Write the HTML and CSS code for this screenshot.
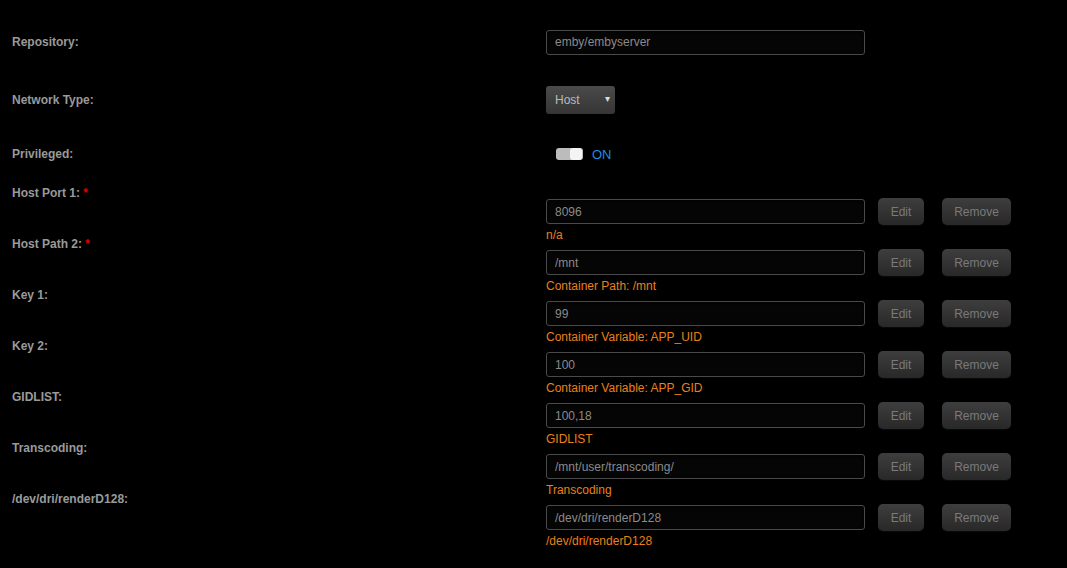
FILE: index.html
```html
<!DOCTYPE html>
<html lang="en">
<head>
	<meta charset="UTF-8">
	<title>Template</title>
	<link rel="stylesheet" href="styles.css">
</head>
<body>
	<div class="form">
		<div class="row top r-repo">
			<div class="label">Repository:</div>
			<div class="value"><input class="text" type="text" value="emby/embyserver"></div>
		</div>
		<div class="row top r-net">
			<div class="label">Network Type:</div>
			<div class="value">
				<div class="select">Host<span class="arrow">&#9662;</span></div>
			</div>
		</div>
		<div class="row top r-priv">
			<div class="label">Privileged:</div>
			<div class="value">
				<span class="switch"><span class="knob"></span></span><span class="on">ON</span>
			</div>
		</div>

		<div class="row cfg">
			<div class="label">Host Port 1: <span class="req">*</span></div>
			<div class="value">
				<div class="line"><input class="text" type="text" value="8096"><button class="btn edit">Edit</button><button class="btn remove">Remove</button></div>
				<div class="desc">n/a</div>
			</div>
		</div>
		<div class="row cfg">
			<div class="label">Host Path 2: <span class="req">*</span></div>
			<div class="value">
				<div class="line"><input class="text" type="text" value="/mnt"><button class="btn edit">Edit</button><button class="btn remove">Remove</button></div>
				<div class="desc">Container Path: /mnt</div>
			</div>
		</div>
		<div class="row cfg">
			<div class="label">Key 1:</div>
			<div class="value">
				<div class="line"><input class="text" type="text" value="99"><button class="btn edit">Edit</button><button class="btn remove">Remove</button></div>
				<div class="desc">Container Variable: APP_UID</div>
			</div>
		</div>
		<div class="row cfg">
			<div class="label">Key 2:</div>
			<div class="value">
				<div class="line"><input class="text" type="text" value="100"><button class="btn edit">Edit</button><button class="btn remove">Remove</button></div>
				<div class="desc">Container Variable: APP_GID</div>
			</div>
		</div>
		<div class="row cfg">
			<div class="label">GIDLIST:</div>
			<div class="value">
				<div class="line"><input class="text" type="text" value="100,18"><button class="btn edit">Edit</button><button class="btn remove">Remove</button></div>
				<div class="desc">GIDLIST</div>
			</div>
		</div>
		<div class="row cfg">
			<div class="label">Transcoding:</div>
			<div class="value">
				<div class="line"><input class="text" type="text" value="/mnt/user/transcoding/"><button class="btn edit">Edit</button><button class="btn remove">Remove</button></div>
				<div class="desc">Transcoding</div>
			</div>
		</div>
		<div class="row cfg">
			<div class="label">/dev/dri/renderD128:</div>
			<div class="value">
				<div class="line"><input class="text" type="text" value="/dev/dri/renderD128"><button class="btn edit">Edit</button><button class="btn remove">Remove</button></div>
				<div class="desc">/dev/dri/renderD128</div>
			</div>
		</div>
	</div>
</body>
</html>
```
FILE: styles.css
```css
html,body{
	margin:0;
	background:#000;
}
body{
	font-family:"Liberation Sans",Arial,sans-serif;
	font-size:12px;
	color:#999;
}
.form{
	padding:13px 0 40px 12px;
}
.row{
	display:flex;
}
.label{
	width:534px;
	flex:none;
	font-weight:bold;
	color:#9a9a9a;
	line-height:14px;
}
.req{
	color:#e00000;
}
.top{
	align-items:center;
}
.r-repo{height:58px;}
.r-net{height:58px;}
.r-priv{
	height:50px;
	margin-bottom:7px;
}

.text{
	box-sizing:border-box;
	width:319px;
	height:25px;
	margin:0;
	padding:0 8px;
	background:#050505;
	border:1px solid #4a4a4a;
	border-radius:3px;
	box-shadow:inset 0 1px 3px rgba(0,0,0,0.9);
	color:#8a8a8a;
	font-family:"Liberation Sans",Arial,sans-serif;
	font-size:12px;
	outline:none;
}
.select{
	box-sizing:border-box;
	width:69px;
	height:28px;
	padding:0 0 0 9px;
	display:flex;
	align-items:center;
	background:linear-gradient(#4a4a4a,#353535);
	border-radius:3px;
	color:#bbb;
	position:relative;
}
.arrow{
	position:absolute;
	right:5px;
	top:7px;
	font-size:10px;
	color:#ddd;
}
.switch{
	display:inline-block;
	vertical-align:middle;
	margin-left:10px;
	width:27px;
	height:12px;
	border-radius:3px;
	background:#bcbcbc;
	position:relative;
}
.knob{
	position:absolute;
	right:1px;
	top:0;
	width:12px;
	height:12px;
	border-radius:3px;
	background:#f4f4f4;
}
.on{
	vertical-align:middle;
	margin-left:9px;
	color:#1a8fe0;
	font-size:13px;
}

.cfg{
	height:51px;
}
.cfg .value{
	padding-top:13px;
}
.line{
	display:flex;
	align-items:center;
	height:25px;
}
.btn{
	box-sizing:border-box;
	height:27px;
	margin:0;
	padding:0;
	border:none;
	border-radius:5px;
	background:linear-gradient(#3e3e3e,#282828);
	box-shadow:0 1px 1px rgba(255,255,255,0.04);
	color:#7a7a7a;
	font-family:"Liberation Sans",Arial,sans-serif;
	font-size:12px;
}
.edit{
	width:46px;
	margin-left:13px;
}
.remove{
	width:69px;
	margin-left:18px;
}
.desc{
	margin-top:4px;
	line-height:14px;
	color:#e8811a;
}
```
